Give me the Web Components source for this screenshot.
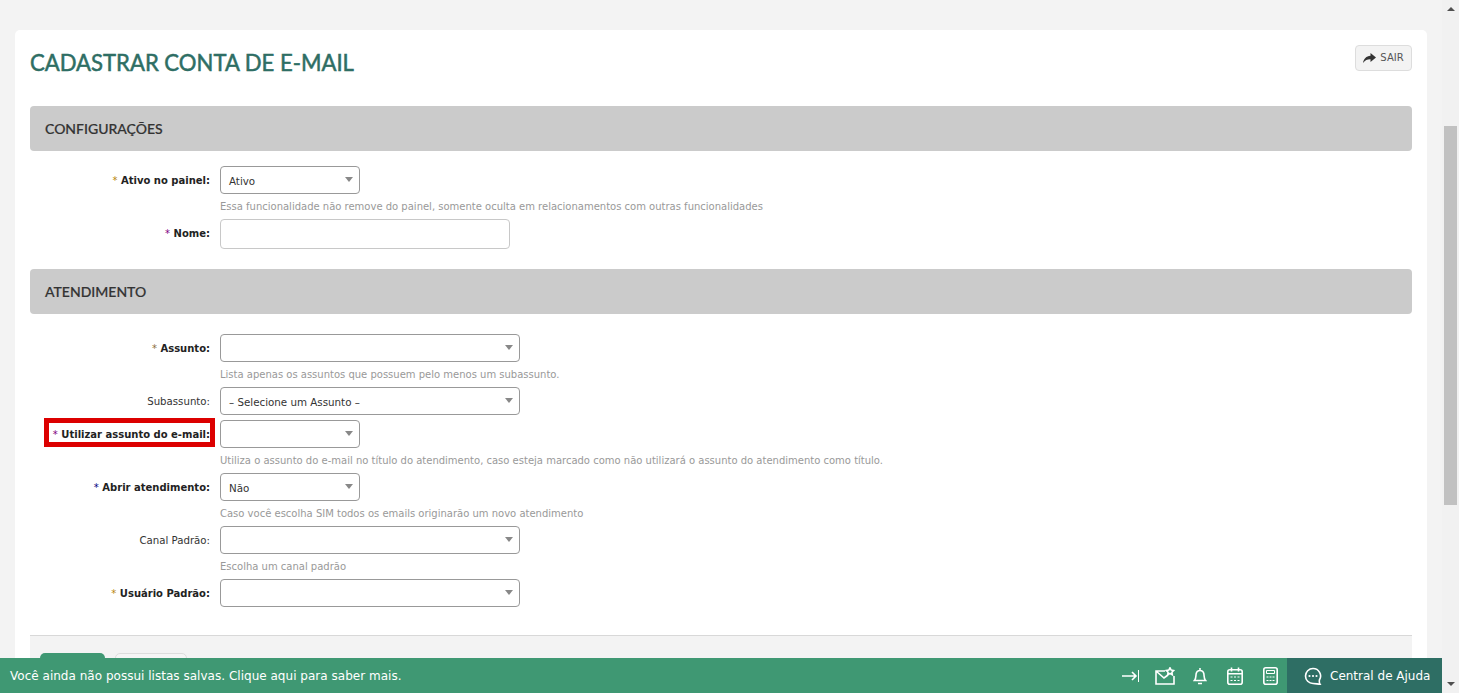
<!DOCTYPE html>
<html lang="pt-BR"><head><meta charset="utf-8"><title>Cadastrar conta de e-mail</title>
<style>
html,body{margin:0;height:100%;overflow:hidden;background:#f3f3f3}
body{font-family:"DejaVu Sans",Verdana,sans-serif;font-size:10px;color:#333}
</style></head><body>
<app-shell>
  <form-card>
    <span slot="title">CADASTRAR CONTA DE E-MAIL</span>
    <form-section heading="CONFIGURAÇÕES">
      <form-row label="Ativo no painel:" req="#b8860b" value="Ativo" w="140" hint="Essa funcionalidade não remove do painel, somente oculta em relacionamentos com outras funcionalidades"></form-row>
      <form-row label="Nome:" req="#800080" kind="input" w="290"></form-row>
    </form-section>
    <form-section heading="ATENDIMENTO" class="second">
      <form-row label="Assunto:" req="#8a6d3b" w="300" hint="Lista apenas os assuntos que possuem pelo menos um subassunto."></form-row>
      <form-row label="Subassunto:" value="– Selecione um Assunto –" w="300" class="gap5"></form-row>
      <form-row label="Utilizar assunto do e-mail:" req="#800080" w="140" marked hint="Utiliza o assunto do e-mail no título do atendimento, caso esteja marcado como não utilizará o assunto do atendimento como título."></form-row>
      <form-row label="Abrir atendimento:" req="#000080" value="Não" w="140" hint="Caso você escolha SIM todos os emails originarão um novo atendimento"></form-row>
      <form-row label="Canal Padrão:" w="300" hint="Escolha um canal padrão"></form-row>
      <form-row label="Usuário Padrão:" req="#b8860b" w="300"></form-row>
    </form-section>
  </form-card>
  <bottom-bar></bottom-bar>
</app-shell>
<script>
const def=(n,css,html)=>customElements.define(n,class extends HTMLElement{
  connectedCallback(){ if(this.shadowRoot)return; const r=this.attachShadow({mode:'open'});
    r.innerHTML='<style>'+css+'</style>'+(typeof html==='function'?html(this):html);}
});
def('app-shell',`:host{display:flex;height:693px;position:relative;overflow:hidden}
 main{flex:none;width:1442px;height:693px;overflow:hidden;padding:30px 15px 0;box-sizing:border-box}
 .sb{width:17px;background:#f1f1f1;position:relative}
 .up,.dn{width:0;height:0;border-left:4px solid transparent;border-right:4px solid transparent;position:absolute;left:5px}
 .up{top:7px;border-bottom:4px solid #505050}.dn{bottom:7px;border-top:4px solid #505050}
 .th{position:absolute;top:126px;left:2px;width:13px;height:379px;background:#c1c1c1}`,
 `<main><slot></slot></main><div class="sb"><i class="up"></i><i class="th"></i><i class="dn"></i></div>`);
def('form-card',`:host{display:block;background:#fff;border-radius:5px 5px 0 0;height:700px;padding:0 15px;position:relative}
 header{display:flex;justify-content:space-between;align-items:flex-start;height:76px}
 h1{margin:0;padding-top:18px;font:400 22.1px/30px Lato,sans-serif;color:#2e6e64;-webkit-text-stroke:.5px #2e6e64}
 .sair{margin-top:15px;width:57px;height:26px;box-sizing:border-box;border:1px solid #ddd;border-radius:4px;background:#f3f3f3;display:flex;align-items:center;justify-content:center;gap:4px;font:10px/1 "DejaVu Sans",sans-serif;color:#555;padding-bottom:1px}
 svg{display:block}
 footer{position:absolute;left:15px;right:15px;top:605px;height:100px;border-top:1px solid #d8d8d8;background:#f3f3f3;box-sizing:border-box}
 .b{position:absolute;top:17px;height:40px;border-radius:5px;box-sizing:border-box}
 .b1{left:10px;width:65px;background:#3f9873}.b2{left:85px;width:72px;border:1px solid #ddd;background:#f5f5f5}`,
 `<header><h1><slot name="title"></slot></h1><div class="sair"><svg width="13" height="10" viewBox="0 0 13 10"><path fill="#333" d="M7.500 0L13 4.500 7.500 9V6.300C4.500 6.200 2.200 7.200 0 10 .6 5.800 3.300 3 7.500 2.700z"/></svg>SAIR</div></header><slot></slot><footer><div class="b b1"></div><div class="b b2"></div></footer>`);
def('form-section',`:host{display:block;margin-bottom:20px}
 h2{margin:0 0 15px;height:45px;background:#cbcbcb;border-radius:4px;padding-left:15px;font:500 14px/45px Lato,sans-serif;color:#333;-webkit-text-stroke:.2px #333}
 :host(.second) h2{margin-bottom:20px}`,
 h=>`<h2>${h.getAttribute('heading')}</h2><slot></slot>`);
def('form-row',`:host{display:grid;grid-template-columns:180px auto;column-gap:10px;align-items:start;margin-bottom:4px}
 :host(.gap5){margin-bottom:5px}
 .l{height:28px;line-height:30px;text-align:right;white-space:nowrap;position:relative;font-size:10.2px;color:#333}
 .l.req{font-size:10px;font-weight:700;color:#222}
 .l i{font-style:normal;font-weight:400}
 .mark{position:absolute;left:14px;right:-5px;top:-2px;height:29px;border:5px solid #dc0000;box-sizing:border-box}
 .f{box-sizing:border-box;height:28px;border:1px solid #999;border-radius:4px;background:#fff;position:relative;padding:2px 8px 0;line-height:24px;font-size:10.3px;color:#333}
 .f:after{content:"";position:absolute;right:6px;top:10px;border-left:4px solid transparent;border-right:4px solid transparent;border-top:5px solid #888}
 .f.input{height:30px;border-color:#c8c8c8}.f.input:after{display:none}
 .h{grid-column:2;height:21px;line-height:26px;white-space:nowrap;font-size:10px;color:#999}`,
 h=>{const g=a=>h.getAttribute(a),rq=g('req');
  return `<div class="l ${rq?'req':''}">${rq?`<i style="color:${rq}">*</i> `:''}${g('label')}${h.hasAttribute('marked')?'<div class="mark"></div>':''}</div>
  <div class="f ${g('kind')||''}" style="width:${g('w')}px">${g('value')||''}</div>${g('hint')?`<div class="h">${g('hint')}</div>`:''}`});
def('bottom-bar',`:host{position:absolute;left:0;top:658px;width:1442px;height:35px;background:#3f9873;display:flex;align-items:center;color:#fff;font-size:12px}
 .m{flex:1;padding-left:10px;letter-spacing:.02px}
 .i{display:flex;align-items:center;padding-right:9px}
 svg{display:block;fill:none;stroke:#fff;stroke-width:1.600}
 .h{width:155px;height:35px;background:#2e6e64;display:flex;align-items:center;gap:8px;padding-left:17px;box-sizing:border-box}`,
 `<div class="m">Você ainda não possui listas salvas. Clique aqui para saber mais.</div>
 <div class="i">
 <svg style="margin-right:16px" width="17" height="18" viewBox="0 0 17 18"><path d="M0 9h14M10 5l4 4-4 4"/><path stroke-width="1" d="M16.500 3v12"/></svg>
 <svg style="margin-right:18px" width="20" height="18" viewBox="0 0 20 18"><path d="M10 4H1v13h18V9M1 4l8 7 4-3"/><path d="M15 .8l1.200 2.300 2.500.4-1.800 1.700.4 2.500-2.300-1.200-2.300 1.200.4-2.500-1.800-1.700 2.500-.4z"/></svg>
 <svg style="margin-right:20px" width="14" height="18" viewBox="0 0 14 18"><path d="M1.500 13.500c1.500-1.500 1.300-4 1.600-6.500.4-2 1.800-3.500 3.900-3.500s3.500 1.500 3.900 3.500c.3 2.500.1 5 1.600 6.500zM.8 13.500h12.400M5 16.500h4M7 1v2.500"/></svg>
 <svg style="margin-right:20px" width="16" height="18" viewBox="0 0 16 18"><rect x=".8" y="2.800" width="14.400" height="14.400" rx="2"/><path d="M1 6.800h14M4.500 .5v4M11.500 .5v4"/><path stroke-width="1.200" d="M3.500 10h2M7 10h2M10.500 10h2M3.500 13.500h2M7 13.500h2M10.500 13.500h2"/></svg>
 <svg width="15" height="18" viewBox="0 0 15 18"><rect x=".8" y=".8" width="13.400" height="16.400" rx="2"/><path stroke-width="1" d="M3.500 3.500h8v3h-8z"/><path stroke-width="1.200" d="M3.500 10h2M6.500 10h2M9.500 10h2M3.500 13.500h2M6.500 13.500h2M9.500 13.500h2"/></svg>
 </div>
 <div class="h"><svg width="18" height="18" viewBox="0 0 18 18"><path d="M9 1.500a7.500 7.500 0 1 0 0 15c2 0 5.500.7 7 .7-.8-1.200-.8-2.500-.6-4.200A7.500 7.500 0 0 0 9 1.500z"/><g fill="#fff" stroke="none"><circle cx="5.500" cy="9" r="1.100"/><circle cx="9" cy="9" r="1.100"/><circle cx="12.500" cy="9" r="1.100"/></g></svg>Central de Ajuda</div>`);
</script>
</body></html>
